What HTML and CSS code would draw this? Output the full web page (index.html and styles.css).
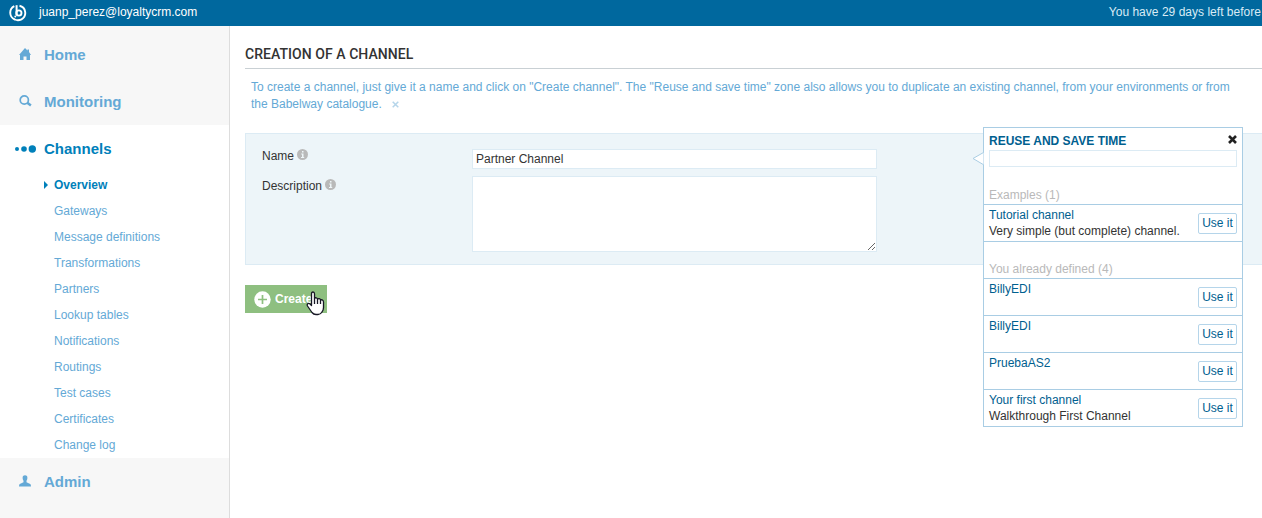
FILE: index.html
```
<!DOCTYPE html>
<html lang="en">
<head>
<meta charset="utf-8">
<title>Creation of a channel</title>
<link rel="stylesheet" href="styles.css">
</head>
<body>
<header class="topbar">
  <svg class="logo" viewBox="0 0 18 18" width="18" height="18" fill="none" stroke="#fff"><path d="M5.300 2.200A7.300 7.300 0 0 0 5.800 15.500Q9 17 12.500 15.300A7.300 7.300 0 0 0 10.500 1.800" stroke-width="1.900"/><path d="M7.600 1.200v10" stroke-width="2"/><circle cx="9.900" cy="9" r="2.600" stroke-width="1.900"/><circle cx="6.300" cy="12.500" r="1" fill="#fff" stroke="none"/></svg>
  <span class="account">juanp_perez@loyaltycrm.com</span>
  <span class="trial">You have 29 days left before</span>
</header>
<div class="layout">
  <nav class="sidebar">
    <a class="section"><span class="icon"><svg class="home" width="12" height="12" viewBox="0 0 12 12" fill="#64a9d6"><path d="M6 0 8.500 2.500V1.500H10V4l2 3h-1v5H7.500V8.500h-3V12H1V7H0z"/></svg></span>Home</a>
    <a class="section"><span class="icon"><svg class="search-icon" width="13" height="12" viewBox="0 0 13 12" fill="none" stroke="#64a9d6"><circle cx="5.300" cy="5" r="4.100" stroke-width="1.700"/><path d="m8.300 7.800 3.600 2.700" stroke-width="2.500"/></svg></span>Monitoring</a>
    <div class="open">
      <a class="section current"><span class="icon"><svg width="22" height="8" viewBox="0 0 22 8" fill="#0080ba"><circle cx="3" cy="4" r="2"/><circle cx="10" cy="4" r="2.800"/><circle cx="18.300" cy="4" r="3.700"/></svg></span>Channels</a>
      <ul class="subnav">
        <li class="active">Overview</li><li>Gateways</li><li>Message definitions</li><li>Transformations</li><li>Partners</li><li>Lookup tables</li><li>Notifications</li><li>Routings</li><li>Test cases</li><li>Certificates</li><li>Change log</li>
      </ul>
    </div>
    <a class="section"><span class="icon"><svg class="user" width="12" height="12" viewBox="0 0 12 12" fill="#64a9d6"><path d="M4 1Q6-.7 8 1c.8 2 .3 3.500-.5 4.800v1.400l3.700 1.900q.8.400.8 2.400H0q0-2 .8-2.400l3.700-1.900V5.800C3.700 4.500 3.200 3 4 1z"/></svg></span>Admin</a>
  </nav>
  <main class="content">
    <h1 class="title">CREATION OF A CHANNEL</h1>
    <p class="hint">To create a channel, just give it a name and click on "Create channel". The "Reuse and save time" zone also allows you to duplicate an existing channel, from your environments or from<br>the Babelway catalogue. <svg class="dismiss" width="7" height="7" viewBox="0 0 7 7" stroke="#b5d5ea" stroke-width="1.500"><path d="m.7.700 5.600 5.600m0-5.600L.7 6.300"/></svg></p>
    <form class="panel">
      <div class="field">
        <span class="label">Name <svg class="info" width="11" height="11" viewBox="0 0 11 11"><circle cx="5.500" cy="5.500" r="5.500" fill="#b9b9b9"/><path d="M5 2h1.500v1.500H5zM4.200 4.500h2.300V8h.7v1H4V8h1V5.500h-.8z" fill="#eef5f8"/></svg></span>
        <input class="control" type="text" value="Partner Channel">
      </div>
      <div class="field">
        <span class="label lower">Description <svg class="info" width="11" height="11" viewBox="0 0 11 11"><circle cx="5.500" cy="5.500" r="5.500" fill="#b9b9b9"/><path d="M5 2h1.500v1.500H5zM4.200 4.500h2.300V8h.7v1H4V8h1V5.500h-.8z" fill="#eef5f8"/></svg></span>
        <textarea class="control area"></textarea>
      </div>
    </form>
    <div class="create"><svg width="17" height="17" viewBox="0 0 17 17"><circle cx="8.500" cy="8.500" r="8.200" fill="#fff"/><path d="M8.500 4v9M4 8.500h9" stroke="#8ebf80" stroke-width="1.700"/></svg><span>Create</span>
      <svg class="cursor" width="19" height="25" viewBox="0 0 19 25"><path d="M5.500 14.500V3Q5.500 1 7 1t1.500 2v4.500Q9 6.500 10.300 6.800T11.500 8.500Q12 7.300 13.300 7.700T14.500 9.500q.5-1 1.700-.6T17.500 11v5.500q0 2.500-1.500 4.500-1.500 2.500-4 2.500h-2q-2.500 0-4-2L1.500 15Q.7 13.300 2 12.600t3.500 1.900zM8.500 7.500V13M11.500 8.500V13M14.500 9.500V13" fill="#fff" stroke="#171725" stroke-width="1.300" stroke-linejoin="round"/></svg>
    </div>
  </main>
</div>
<aside class="popup">
  <svg class="arrow" width="12" height="14" viewBox="0 0 12 14"><path d="M11.500.5 1 6.500l10.500 6.200" fill="#fff" stroke="#a9cde4"/></svg>
  <div class="popup-head"><span>REUSE AND SAVE TIME</span><svg width="9" height="9" viewBox="0 0 9 9" stroke="#222" stroke-width="2.600"><path d="m1 1 7 7m0-7L1 8"/></svg></div>
  <input class="search" type="text">
  <div class="group first">Examples (1)</div>
  <div class="row"><div><div class="name">Tutorial channel</div><div>Very simple (but complete) channel.</div></div><span class="use">Use it</span></div>
  <div class="group">You already defined (4)</div>
  <div class="row"><div class="name">BillyEDI</div><span class="use">Use it</span></div>
  <div class="row"><div class="name">BillyEDI</div><span class="use">Use it</span></div>
  <div class="row"><div class="name">PruebaAS2</div><span class="use">Use it</span></div>
  <div class="row"><div><div class="name">Your first channel</div><div>Walkthrough First Channel</div></div><span class="use">Use it</span></div>
</aside>
</body>
</html>
```

FILE: styles.css
```
* { box-sizing: border-box; }
body { margin: 0; height: 518px; overflow: hidden; font: 12px/16px "Liberation Sans", Arial, sans-serif; color: #333; background: #fff; position: relative; }
svg { flex: none; }
.topbar { height: 26px; padding: 0 1px 2px 9px; display: flex; align-items: center; background: #00689e; color: #fff; white-space: nowrap; }
.logo { margin-top: 1px; }
.account { margin-left: 12px; }
.trial { margin-left: auto; color: #d9ebf5; letter-spacing: .02px; }
.layout { display: flex; height: 492px; }
.sidebar { width: 230px; flex: none; padding-top: 5px; background: #f7f7f7; border-right: 1px solid #ddd; }
.section { display: flex; align-items: center; height: 47px; font-size: 15px; font-weight: bold; color: #64a9d6; padding-left: 12px; }
.icon { width: 26px; margin-right: 6px; display: flex; justify-content: center; }
.home { margin-bottom: 1px; }
.search-icon { margin-bottom: 2px; }
.user { margin-bottom: 2px; }
.open { background: #fff; }
.current { color: #0080ba; }
.subnav { list-style: none; margin: 0; padding: 0 0 0 54px; color: #64a9d6; }
.subnav li { height: 26px; line-height: 26px; }
.subnav .active { color: #0080ba; font-weight: bold; display: flex; align-items: center; margin-left: -10px; }
.active::before { content: ""; border: 4px solid transparent; border-left-color: #0080ba; border-right: 0; margin-right: 6px; }
.content { flex: 1; min-width: 0; padding-left: 15px; }
.title { margin: 0; height: 43px; padding-top: 20px; border-bottom: 1px solid #c9d0d4; font: 500 14px/17px Roboto, sans-serif; letter-spacing: .05px; color: #333; }
.hint { margin: 10px 0 0 6px; line-height: 17px; color: #64a9d6; white-space: nowrap; }
.dismiss { margin-left: 7px; }
.panel { margin-top: 20px; height: 132px; padding: 15px 16px; display: flex; flex-direction: column; gap: 7px; background: #edf5f9; border: 1px solid #dcebf4; border-right: 0; }
.field { display: flex; align-items: flex-start; }
.label { width: 210px; line-height: 14px; }
.lower { padding-top: 3px; }
.info { vertical-align: 0; }
.control { width: 405px; height: 20px; margin: 0; padding: 0 3px; border: 1px solid #dcebf4; background: #fff; font: inherit; color: #333; outline: 0; }
.area { height: 76px; }
.create { position: relative; width: 82px; height: 28px; margin-top: 20px; padding-left: 9px; display: flex; align-items: center; gap: 4px; background: #8ebf80; color: #fff; font-weight: bold; }
.cursor { position: absolute; left: 61px; top: 6px; }
.popup { position: absolute; left: 983px; top: 127px; width: 260px; height: 300px; border: 1px solid #a9cde4; background: #fff; }
.arrow { position: absolute; left: -12px; top: 24px; }
.popup-head { height: 22px; padding: 5px 5px 0; display: flex; justify-content: space-between; font-weight: bold; color: #00608f; }
.popup-head svg { margin-top: 2px; }
.search { display: block; width: 248px; height: 17px; margin: 0 5px; padding: 0; border: 1px solid #dcebf4; }
.group { height: 37px; padding: 19px 5px 0; color: #b9b9b9; border-top: 1px solid #a9cde4; }
.first { padding-top: 20px; border-top: 0; }
.row { height: 37px; padding: 2px 5px 0; display: flex; justify-content: space-between; border-top: 1px solid #a9cde4; }
.name { color: #00608f; }
.use { width: 39px; height: 21px; margin-top: 6px; line-height: 19px; text-align: center; border: 1px solid #b5d5ea; border-radius: 2px; color: #00608f; }
```
